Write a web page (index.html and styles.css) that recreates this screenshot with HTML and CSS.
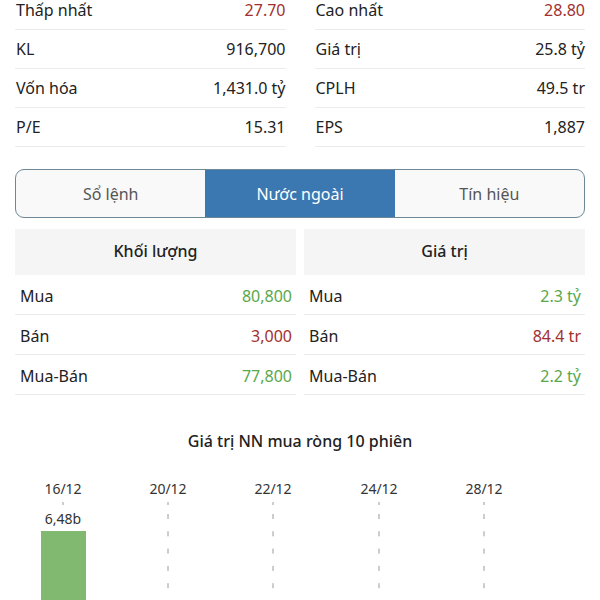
FILE: index.html
```html
<!DOCTYPE html>
<html lang="vi">
<head>
  <meta charset="UTF-8" />
  <meta name="viewport" content="width=device-width, initial-scale=1.0"/>
  <title>Chi tiết cổ phiếu</title>
  <link rel="stylesheet" href="styles.css">
</head>
<body>
  <div class="container">
    <div class="stats">
      <div class="stat-col">
        <div class="stat-row"><span>Thấp nhất</span><span class="down">27.70</span></div>
        <div class="stat-row"><span>KL</span><span>916,700</span></div>
        <div class="stat-row"><span>Vốn hóa</span><span>1,431.0 tỷ</span></div>
        <div class="stat-row"><span>P/E</span><span>15.31</span></div>
      </div>
      <div class="stat-col">
        <div class="stat-row"><span>Cao nhất</span><span class="down">28.80</span></div>
        <div class="stat-row"><span>Giá trị</span><span>25.8 tỷ</span></div>
        <div class="stat-row"><span>CPLH</span><span>49.5 tr</span></div>
        <div class="stat-row"><span>EPS</span><span>1,887</span></div>
      </div>
    </div>

    <div class="tabs">
      <div class="tab">Sổ lệnh</div>
      <div class="tab active">Nước ngoài</div>
      <div class="tab">Tín hiệu</div>
    </div>

    <div class="foreign">
      <div class="foreign-col">
        <div class="foreign-head">Khối lượng</div>
        <div class="foreign-row"><span>Mua</span><span class="up">80,800</span></div>
        <div class="foreign-row"><span>Bán</span><span class="down">3,000</span></div>
        <div class="foreign-row"><span>Mua-Bán</span><span class="up">77,800</span></div>
      </div>
      <div class="foreign-col">
        <div class="foreign-head">Giá trị</div>
        <div class="foreign-row"><span>Mua</span><span class="up">2.3 tỷ</span></div>
        <div class="foreign-row"><span>Bán</span><span class="down">84.4 tr</span></div>
        <div class="foreign-row"><span>Mua-Bán</span><span class="up">2.2 tỷ</span></div>
      </div>
    </div>

    <h2 class="chart-title">Giá trị NN mua ròng 10 phiên</h2>
  </div>

  <svg class="chart" width="600" height="140" viewBox="0 0 600 140">
    <g class="dates">
      <text x="63" y="25">16/12</text>
      <text x="168" y="25">20/12</text>
      <text x="273" y="25">22/12</text>
      <text x="379" y="25">24/12</text>
      <text x="484" y="25">28/12</text>
    </g>
    <g class="grid">
      <line x1="63" y1="33" x2="63" y2="36" />
      <line x1="168" y1="33" x2="168" y2="36" />
      <line x1="273" y1="33" x2="273" y2="36" />
      <line x1="379" y1="33" x2="379" y2="36" />
      <line x1="484" y1="33" x2="484" y2="36" />
      <line class="dash" x1="168" y1="45" x2="168" y2="140" />
      <line class="dash" x1="273" y1="45" x2="273" y2="140" />
      <line class="dash" x1="379" y1="45" x2="379" y2="140" />
      <line class="dash" x1="484" y1="45" x2="484" y2="140" />
    </g>
    <text class="bar-label" x="63" y="55">6,48b</text>
    <rect class="bar" x="41" y="62" width="45" height="80" />
  </svg>
</body>
</html>
```

FILE: styles.css
```css
:root {
  --text: #222;
  --muted: #555;
  --line: #ececec;
  --up: #5aa84a;
  --down: #a2302e;
  --tab-border: #6d8797;
  --tab-active: #3b78b2;
  --head-bg: #f5f5f5;
}

* {
  box-sizing: border-box;
  margin: 0;
  padding: 0;
}

body {
  font-family: "Noto Sans", "DejaVu Sans", sans-serif;
  font-size: 16px;
  color: var(--text);
  background: #fff;
  overflow: hidden;
}

.container {
  padding: 0 15px;
}

/* top stats */
.stats {
  display: grid;
  grid-template-columns: 1fr 1fr;
  column-gap: 29px;
  margin-top: -9px;
}

.stat-row {
  display: flex;
  justify-content: space-between;
  align-items: center;
  height: 39px;
  padding: 0 0 0 1px;
  border-bottom: 1px solid var(--line);
}

.up { color: var(--up); }
.down { color: var(--down); }

/* tabs */
.tabs {
  display: grid;
  grid-template-columns: repeat(3, 1fr);
  height: 49px;
  margin-top: 22px;
  border: 1.5px solid var(--tab-border);
  border-radius: 9px;
  overflow: hidden;
  background: #f9f9f9;
}

.tab {
  display: flex;
  align-items: center;
  justify-content: center;
  color: var(--muted);
}

.tab.active {
  background: var(--tab-active);
  color: #fff;
}

/* foreign trading */
.foreign {
  display: grid;
  grid-template-columns: 1fr 1fr;
  column-gap: 8px;
  margin-top: 11px;
}

.foreign-head {
  height: 46px;
  display: flex;
  align-items: center;
  justify-content: center;
  background: var(--head-bg);
  font-weight: 500;
  padding-bottom: 2px;
}

.foreign-row {
  display: flex;
  justify-content: space-between;
  align-items: center;
  height: 40px;
  padding: 2px 4px 0 5px;
  border-bottom: 1px solid var(--line);
}

/* chart */
.chart-title {
  font-size: 16px;
  font-weight: 500;
  text-align: center;
  margin-top: 35px;
  line-height: 22px;
}

.chart {
  display: block;
  margin-top: 17px;
}

.chart text {
  font-family: "Noto Sans", "DejaVu Sans", sans-serif;
  font-size: 14px;
  fill: #333;
  text-anchor: middle;
}

.grid line {
  stroke: #9a9a9a;
  stroke-width: 1;
}

.grid .dash {
  stroke-dasharray: 5 12.3;
}

.bar {
  fill: #80b96f;
}
```
